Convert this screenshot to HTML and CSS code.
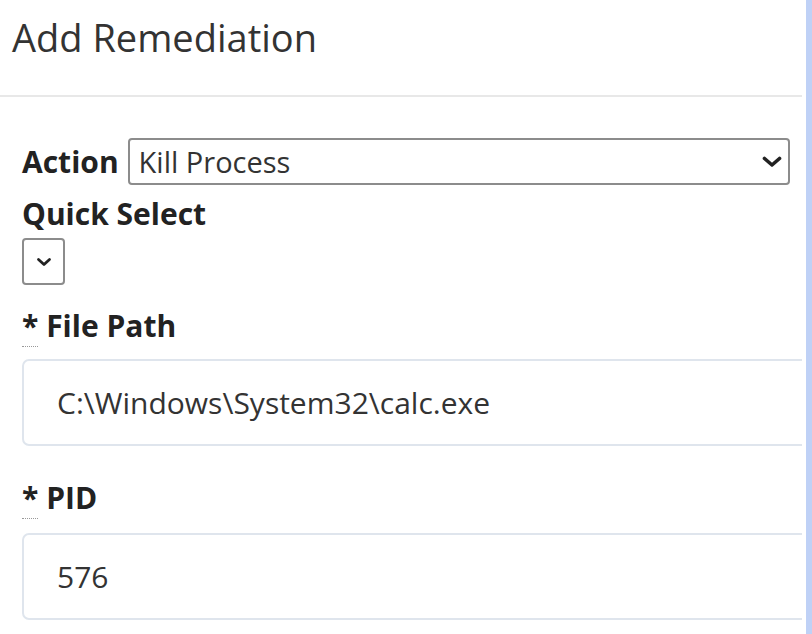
FILE: index.html
```html
<!DOCTYPE html>
<html>
<head>
<meta charset="utf-8">
<link rel="stylesheet" href="styles.css">
</head>
<body>
<div class="page">
  <div class="panel">
    <div class="header">
      <h1 class="title">Add Remediation</h1>
    </div>
    <div class="content">
      <div class="action-row">
        <label class="label">Action</label>
        <div class="select-wrap wide">
          <div class="select-box">Kill Process</div>
          <svg class="chev" width="20" height="12" viewBox="0 0 20 12"><path d="M2.5 2.5 L10 9 L17.5 2.5" fill="none" stroke="#222" stroke-width="3.6" stroke-linecap="round" stroke-linejoin="round"/></svg>
        </div>
      </div>
      <div class="label quick">Quick Select</div>
      <div class="select-wrap small">
        <div class="select-box"></div>
        <svg class="chev" width="16" height="10" viewBox="0 0 16 10"><path d="M2.5 2.5 L8 7.5 L13.5 2.5" fill="none" stroke="#222" stroke-width="2.8" stroke-linecap="round" stroke-linejoin="round"/></svg>
      </div>
      <div class="field first">
        <div class="label"><abbr class="req" title="required">*</abbr> File Path</div>
        <div class="input">C:\Windows\System32\calc.exe</div>
      </div>
      <div class="field second">
        <div class="label"><abbr class="req" title="required">*</abbr> PID</div>
        <div class="input">576</div>
      </div>
    </div>
  </div>
  <div class="gutter"></div>
  <div class="strip"></div>
</div>
</body>
</html>
```
FILE: styles.css
```css
html, body {
  margin: 0;
  padding: 0;
  background: #ffffff;
}
body {
  font-family: "Open Sans", "Noto Sans", sans-serif;
  color: #333;
}
.page {
  display: flex;
  height: 634px;
  overflow: hidden;
}
.panel {
  width: 802px;
  flex: none;
  overflow: hidden;
}
.gutter {
  width: 4px;
  flex: none;
}
.strip {
  flex: 1;
  background: #bfd1f6;
}
.header {
  padding: 11px 0 0 12px;
  height: 84px;
  border-bottom: 2px solid #e8e8e8;
}
.title {
  margin: 0;
  font-size: 38px;
  font-weight: 400;
  color: #333;
  line-height: normal;
}
.content {
  padding: 41px 0 0 22px;
}
.label {
  font-size: 30px;
  font-weight: 700;
  color: #222;
  line-height: normal;
}
.action-row {
  display: flex;
  align-items: center;
  gap: 9px;
  height: 47px;
}
.select-wrap {
  position: relative;
  box-sizing: border-box;
  height: 47px;
}
.select-wrap.wide {
  width: 662px;
}
.select-wrap.small {
  width: 43px;
  margin-top: 4px;
}
.select-box {
  box-sizing: border-box;
  height: 100%;
  border: 2px solid #8c8c8c;
  border-radius: 4px;
  padding-left: 9px;
  font-size: 29px;
  line-height: 43px;
  color: #333;
}
.chev {
  position: absolute;
  top: 50%;
  transform: translateY(-50%);
}
.wide .chev {
  right: 8px;
}
.small .chev {
  left: 14px;
}
.quick {
  margin-top: 8px;
}
.field.first {
  margin-top: 20px;
}
.field.second {
  margin-top: 31px;
}
.field.second .input {
  margin-top: 15px;
}
.req {
  text-decoration: none;
  border-bottom: 1.5px dotted #999;
}
.input {
  box-sizing: border-box;
  width: 820px;
  height: 87px;
  margin-top: 13px;
  border: 2px solid #dfe5ed;
  border-radius: 7px;
  padding-left: 33px;
  font-size: 30px;
  line-height: 83px;
  color: #333;
}
```
